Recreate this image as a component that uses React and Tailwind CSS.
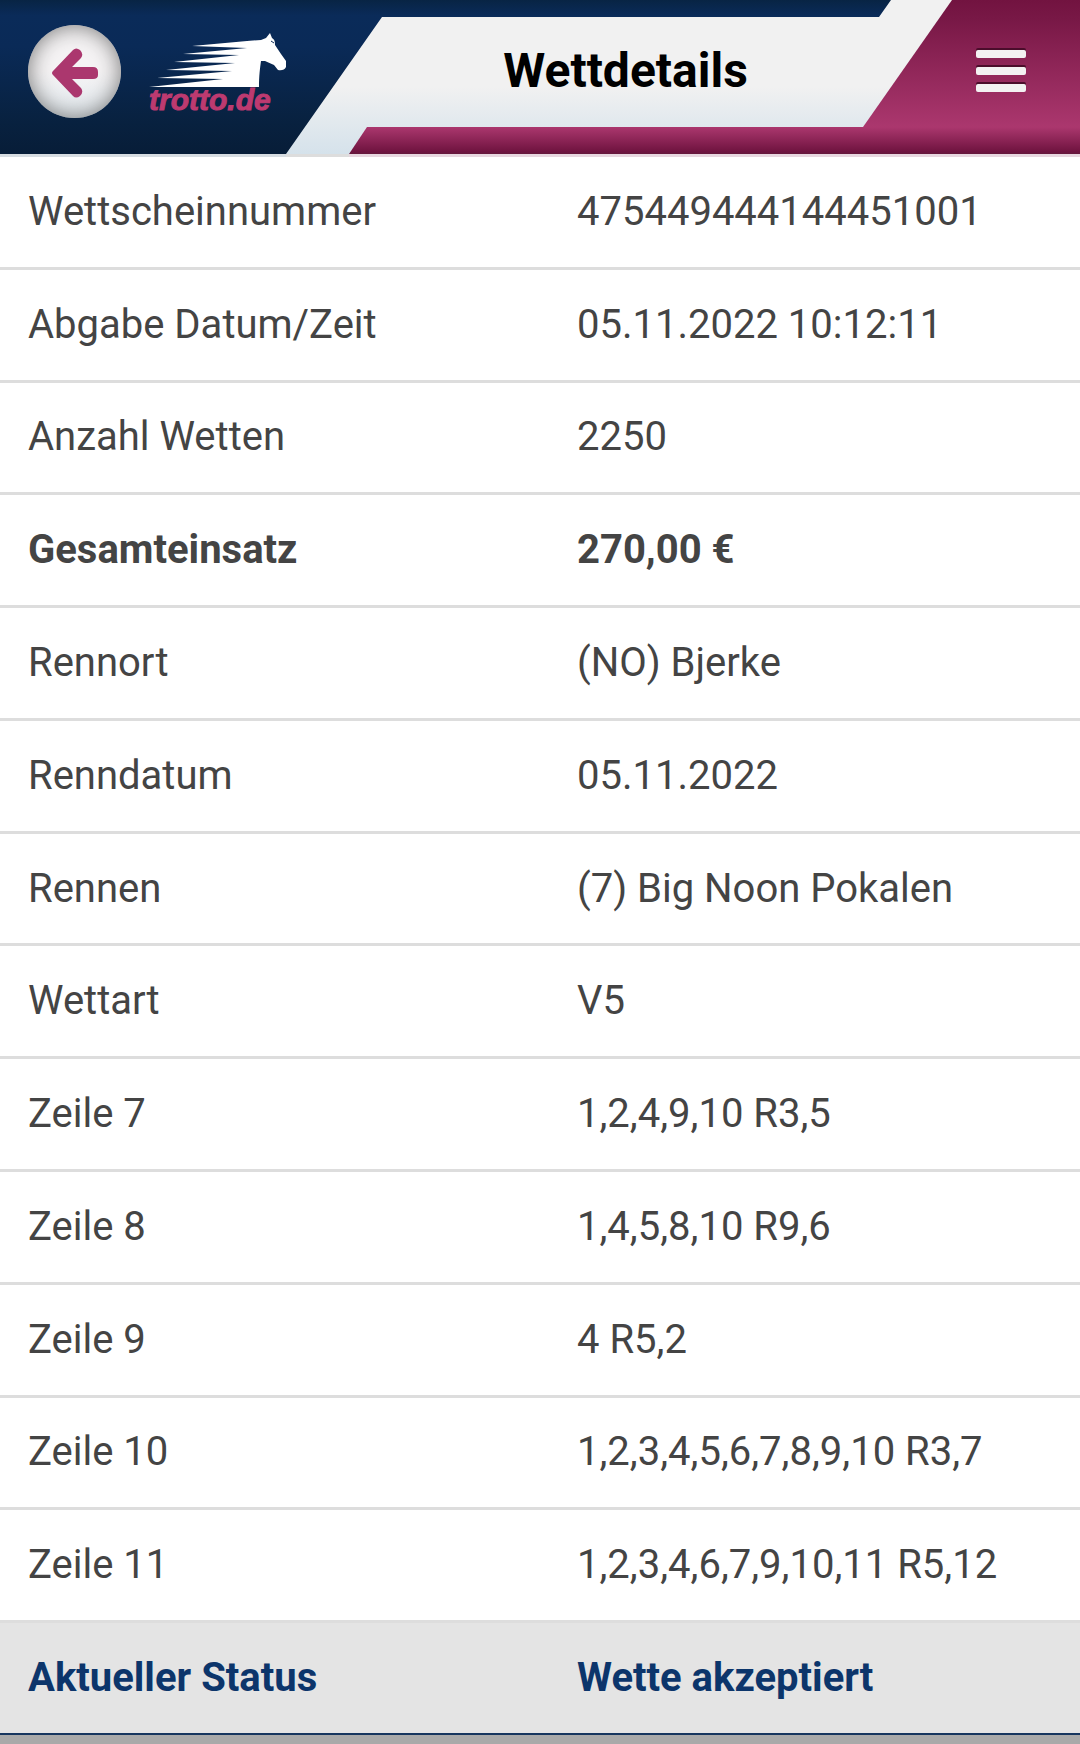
import React from 'react'

const rows = [
  { label: 'Wettscheinnummer', value: '475449444144451001' },
  { label: 'Abgabe Datum/Zeit', value: '05.11.2022 10:12:11' },
  { label: 'Anzahl Wetten', value: '2250' },
  { label: 'Gesamteinsatz', value: '270,00 €', bold: true },
  { label: 'Rennort', value: '(NO) Bjerke' },
  { label: 'Renndatum', value: '05.11.2022' },
  { label: 'Rennen', value: '(7) Big Noon Pokalen' },
  { label: 'Wettart', value: 'V5' },
  { label: 'Zeile 7', value: '1,2,4,9,10 R3,5' },
  { label: 'Zeile 8', value: '1,4,5,8,10 R9,6' },
  { label: 'Zeile 9', value: '4 R5,2' },
  { label: 'Zeile 10', value: '1,2,3,4,5,6,7,8,9,10 R3,7' },
  { label: 'Zeile 11', value: '1,2,3,4,6,7,9,10,11 R5,12' },
]

const HeaderArt = () => (
  <svg
    className="absolute inset-0 w-full h-full"
    viewBox="0 0 1080 157"
    preserveAspectRatio="none"
    aria-hidden="true"
  >
    <defs>
      <linearGradient id="navy" x1="0" y1="0" x2="0" y2="1">
        <stop offset="0" stopColor="#082444" />
        <stop offset="0.1" stopColor="#0a2b59" />
        <stop offset="0.3" stopColor="#0a2a57" />
        <stop offset="0.8" stopColor="#08213f" />
        <stop offset="1" stopColor="#071d38" />
      </linearGradient>
      <linearGradient id="silver" gradientUnits="userSpaceOnUse" x1="0" y1="0" x2="0" y2="154">
        <stop offset="0" stopColor="#f1f1f1" />
        <stop offset="0.56" stopColor="#f1f1f1" />
        <stop offset="1" stopColor="#d5e2eb" />
      </linearGradient>
      <linearGradient id="berry" x1="0" y1="0" x2="0" y2="1">
        <stop offset="0" stopColor="#721340" />
        <stop offset="0.15" stopColor="#781846" />
        <stop offset="1" stopColor="#ab376e" />
      </linearGradient>
      <linearGradient id="berryBar" x1="0" y1="0" x2="0" y2="1">
        <stop offset="0" stopColor="#ab376e" />
        <stop offset="0.9" stopColor="#701440" />
        <stop offset="1" stopColor="#64183c" />
      </linearGradient>
    </defs>
    <rect width="1080" height="154" fill="url(#navy)" />
    <path d="M382 17H879L891 0H1080V154H286Z" fill="url(#silver)" />
    <path d="M952 0H1080V127H863Z" fill="url(#berry)" />
    <path d="M367 127H1080V154H349Z" fill="url(#berryBar)" />
    <rect y="154" width="286" height="3" fill="#d6dce1" />
    <rect x="286" y="154" width="63" height="3" fill="#dddddd" />
    <rect x="349" y="154" width="731" height="3" fill="#e7d7df" />
  </svg>
)

const Logo = () => (
  <svg className="block w-[138px] h-24" viewBox="0 -10 138 96" role="img" aria-label="trotto.de">
    <path
      fill="#fff"
      d="M43 13L98 8L112 7L117 5L121 0L123 5C126 7 126 9 126 12L132 21L137 28V34Q135 38 129 37L125 32L116 28L112 28C111 35 110 43 110 54H0L74 46L8 45L83 38L17 37L86 30L25 29L90 22L34 21L98 15Z"
    />
    <path d="M122 8L125 10" stroke="#0a2a57" strokeWidth="1" />
    <text
      x="0"
      y="77"
      fill="#bd3a70"
      stroke="#bd3a70"
      strokeWidth="1"
      fontFamily="'Liberation Sans', Arial, sans-serif"
      fontSize="30"
      fontWeight="700"
      fontStyle="italic"
    >
      trotto.de
    </text>
  </svg>
)

const Header = () => (
  <header className="relative h-[157px] shrink-0">
    <HeaderArt />
    <div className="relative h-[142px] pl-7 pr-[54px] flex items-center">
      <div className="flex items-center gap-7">
        <button
          type="button"
          aria-label="Zurück"
          className="size-[93px] rounded-full flex items-center justify-center bg-linear-to-b from-[#f5f3f4] from-50% to-[#e1e9ee] shadow-[inset_0_0_22px_#777777]"
        >
          <svg className="w-[46px] h-[50px] mt-1" viewBox="0 0 46 50" aria-hidden="true">
            <path
              fill="#ab376e"
              d="M1 23L21 2Q24 -1 28 2Q32 6 29 10L20 19H41Q46 19 46 24V27Q46 31 41 31H20L29 40Q32 44 28 48Q24 51 21 48L1 27Q-1 25 1 23Z"
            />
          </svg>
        </button>
        <a href="#">
          <Logo />
        </a>
      </div>
      <h1 className="flex-1 pr-3 text-center text-5xl font-bold text-black">Wettdetails</h1>
      <button type="button" aria-label="Menü" className="flex flex-col gap-[9px]">
        <span className="block w-[50px] h-2 rounded-xs bg-[#f3f1f2] shadow-[0_-2px_0_#4b0d2b]" />
        <span className="block w-[50px] h-2 rounded-xs bg-[#f3f1f2] shadow-[0_-2px_0_#4b0d2b]" />
        <span className="block w-[50px] h-2 rounded-xs bg-[#f3f1f2] shadow-[0_-2px_0_#4b0d2b]" />
      </button>
    </div>
  </header>
)

const App = () => {
  return (
    <div className="min-h-screen flex flex-col bg-white font-[Roboto,sans-serif]">
      <Header />
      <table className="flex-1 w-full table-fixed border-collapse text-left text-[40px] leading-[48px] text-[#444444]">
        <tbody>
          {rows.map((row) => (
            <tr key={row.label} className="border-b-3 border-[#dddddd]">
              <th
                scope="row"
                className={row.bold ? 'w-1/2 py-[30px] pl-7 font-bold' : 'w-1/2 py-[30px] pl-7 font-normal'}
              >
                {row.label}
              </th>
              <td className={row.bold ? 'py-[30px] pl-[37px] font-bold' : 'py-[30px] pl-[37px]'}>
                {row.value}
              </td>
            </tr>
          ))}
          <tr className="bg-[#e4e4e4] font-bold text-[#0c356b]">
            <th scope="row" className="py-[30px] pl-7">Aktueller Status</th>
            <td className="py-[30px] pl-[37px]">Wette akzeptiert</td>
          </tr>
        </tbody>
      </table>
      <footer className="h-[11px] shrink-0 border-t-2 border-[#17365f] bg-[#a9a9a9]" />
    </div>
  )
}

export default App
